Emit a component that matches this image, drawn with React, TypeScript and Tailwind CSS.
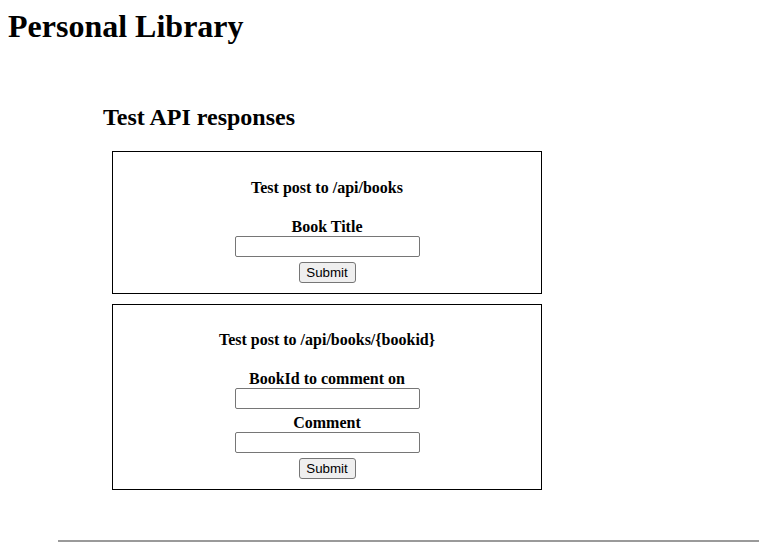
const serif = "font-['Liberation_Serif',_'Times_New_Roman',_serif]";

function TextInput() {
  return (
    <input
      type="text"
      className="box-border h-[21px] w-[185px] rounded-[2px] border border-[#767676] bg-white px-[2px] font-['Liberation_Sans',_Arial,_sans-serif] text-[13.33px] outline-none"
    />
  );
}

function SubmitButton() {
  return (
    <button
      type="button"
      className="box-border mt-[5px] h-[21px] w-[57px] rounded-[3px] border border-[#767676] bg-[#efefef] font-['Liberation_Sans',_Arial,_sans-serif] text-[13.33px] leading-[17px] text-black"
    >
      Submit
    </button>
  );
}

function Label({ children }: { children: React.ReactNode }) {
  return <p className="text-[16px] font-bold leading-[18px]">{children}</p>;
}

export default function App() {
  return (
    <div className={`${serif} min-h-[556px] bg-white text-black`}>
      <h1 className="ml-[8px] pt-[8px] text-[32px] font-bold leading-[36px]">Personal Library</h1>

      <div className="ml-[103px] mt-[59px]">
        <h2 className="text-[24px] font-bold leading-[28px]">Test API responses</h2>
      </div>

      <div className="ml-[112px] mt-[20px] flex w-[430px] flex-col gap-[10px]">
        <form className="flex flex-col items-center border border-black pb-[10px] pt-[27px]">
          <Label>Test post to /api/books</Label>
          <div className="mt-[21px] flex flex-col items-center">
            <Label>Book Title</Label>
            <TextInput />
          </div>
          <SubmitButton />
        </form>

        <form className="flex flex-col items-center border border-black pb-[10px] pt-[26px]">
          <Label>Test post to /api/books/{'{bookid}'}</Label>
          <div className="mt-[21px] flex flex-col items-center">
            <Label>BookId to comment on</Label>
            <TextInput />
          </div>
          <div className="mt-[5px] flex flex-col items-center">
            <Label>Comment</Label>
            <TextInput />
          </div>
          <SubmitButton />
        </form>
      </div>

      <div className="ml-[58px] mt-[50px] h-[2px] bg-[#9a9a9a]" />
    </div>
  );
}
